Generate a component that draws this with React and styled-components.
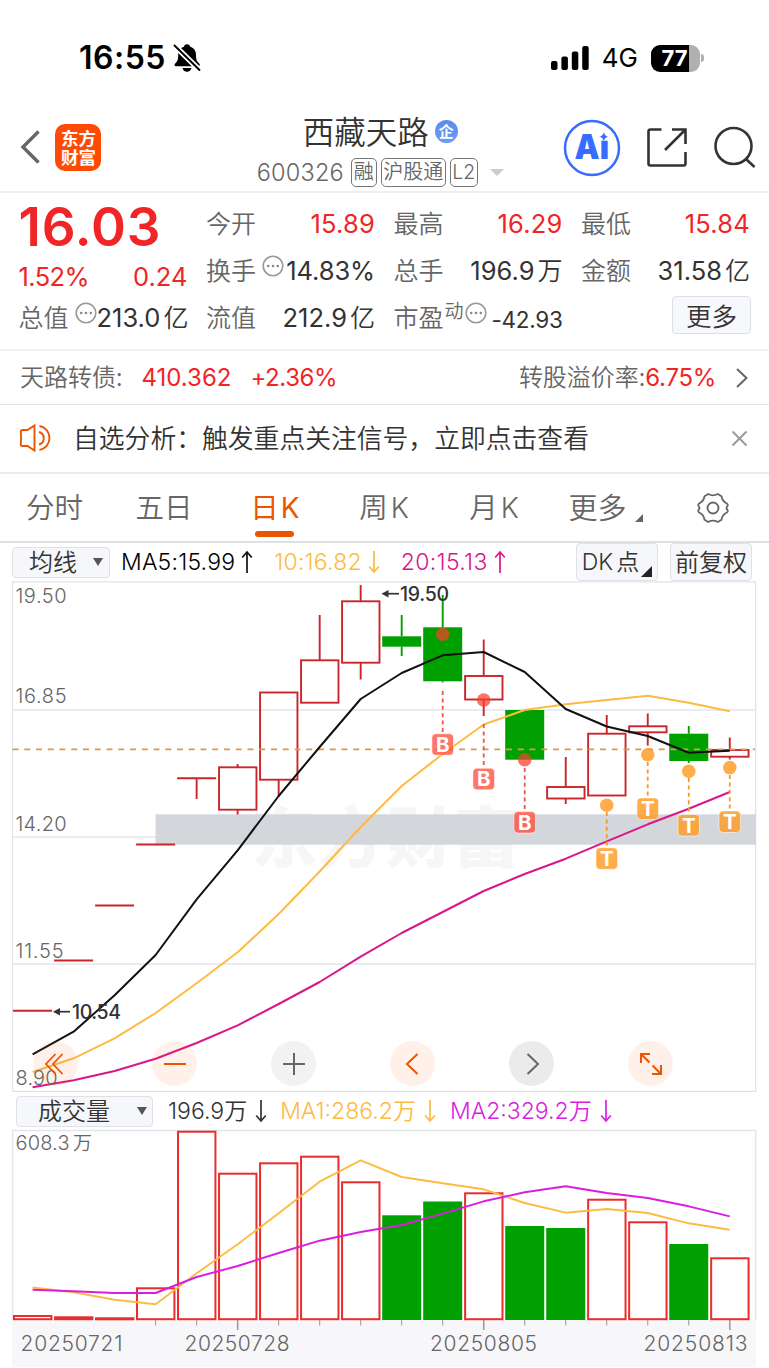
import React from 'react';
import styled, { createGlobalStyle } from 'styled-components';

const RED = '#f12526';
const CANDLE_RED = '#c9252b';
const GREEN = '#00a000';
const ORANGE = '#ea5504';
const YELLOW = '#fdbb42';
const MAGENTA = '#d9168a';
const PURPLE = '#d91ee0';

const GlobalStyle = createGlobalStyle`
  * { box-sizing: border-box; }

  body {
    margin: 0;
    background: #fff;
    color: #333;
    font-family: Inter, 'Noto Sans CJK SC', sans-serif;
    font-weight: 400;
  }

  svg {
    display: block;
    flex-shrink: 0;
    overflow: visible;
  }
`;

const Page = styled.div`
  width: 769px;
  height: 1368px;
  overflow: hidden;
  background: #fff;
`;

const Text = styled.span`
  font-size: ${(props) => props.$size}px;
  font-weight: ${(props) => props.$weight || 400};
  color: ${(props) => props.$color || '#333'};
  letter-spacing: ${(props) => props.$ls || 0}px;
  margin-left: ${(props) => props.$ml || 0}px;
  line-height: 1;
  white-space: nowrap;
`;

const Cjk = styled(Text)`
  padding-bottom: 3px;
  font-family: 'Noto Sans CJK SC', sans-serif;
  font-weight: ${(props) => props.$weight || 350};
`;

/* status bar */

const StatusBar = styled.div`
  display: flex;
  align-items: center;
  height: 96px;
  padding: 20px 65px 0 79px;
`;

const StatusRight = styled.div`
  display: flex;
  align-items: center;
  margin-left: auto;
`;

const Battery = styled.div`
  display: flex;
  align-items: center;
  justify-content: center;
  width: 49px;
  height: 27px;
  padding-right: 2px;
  margin-left: 13px;
  border-radius: 9px;
  background: linear-gradient(90deg, #000 0 38px, #b0b0b0 38px);
`;

const BatteryTip = styled.div`
  width: 3px;
  height: 8px;
  margin-left: 1px;
  border-radius: 0 3px 3px 0;
  background: #b0b0b0;
`;

/* header */

const Header = styled.header`
  display: flex;
  align-items: center;
  height: 97px;
  padding: 7px 12px 0 20px;
  border-bottom: 2px solid #eee;
`;

const Logo = styled.div`
  width: 46px;
  height: 47px;
  margin-left: 15px;
  padding: 4px 4px 4px 6px;
  border-radius: 10px;
  background: #ff4a03;
  font-family: 'Noto Sans CJK SC', sans-serif;
  font-size: 17.5px;
  font-weight: 700;
  line-height: 19px;
  color: #fff;
`;

const TitleBlock = styled.div`
  display: flex;
  flex-direction: column;
  align-items: center;
  width: 285px;
  height: 80px;
  margin-left: 139px;
`;

const TitleRow = styled.div`
  display: flex;
  align-items: center;
  height: 42px;
  margin-top: 4px;
`;

const CodeRow = styled.div`
  display: flex;
  align-items: center;
  height: 29px;
  margin-top: 5px;
`;

const CompanyMark = styled.div`
  display: flex;
  align-items: center;
  justify-content: center;
  width: 23px;
  height: 23px;
  margin: 0 0 1px 6px;
  border-radius: 50%;
  background: linear-gradient(#5a8bef, #6e9cf2);
`;

const Tag = styled.span`
  display: flex;
  align-items: center;
  justify-content: center;
  width: ${(props) => props.$w}px;
  height: 29px;
  margin-left: ${(props) => props.$ml || 4}px;
  border: 1px solid #777;
  border-radius: 5px;
`;

const Caret = styled.i`
  width: 0;
  height: 0;
  margin-left: ${(props) => props.$ml}px;
  border: solid transparent;
  border-width: ${(props) => props.$h}px ${(props) => props.$w / 2}px 0;
  border-top-color: ${(props) => props.$color};
`;

const HeaderIcons = styled.div`
  display: flex;
  align-items: center;
  margin-left: 42px;
  padding-top: 2px;
`;

/* quote */

const Quote = styled.section`
  display: grid;
  grid-template-columns: repeat(4, 169px);
  column-gap: 18.5px;
  height: 158px;
  padding: 7px 0 0 18.5px;
  border-bottom: 2px solid #f1f1f1;
`;

const QuoteColumn = styled.div`
  display: flex;
  flex-direction: column;
`;

const QuoteRow = styled.div`
  display: flex;
  align-items: center;
  justify-content: space-between;
  height: ${(props) => props.$h || 47}px;
`;

const LabelGroup = styled.div`
  display: flex;
  align-items: center;
`;

const MoreButton = styled.button`
  width: 79px;
  height: 38px;
  margin: 0 -1px 5px auto;
  padding: 0;
  border: 1px solid #dcdfe5;
  border-radius: 4px;
  background: #f7f8fb;
`;

/* rows under the quote */

const BondRow = styled.div`
  display: flex;
  align-items: center;
  height: 54px;
  padding: 0 21px 0 20px;
  border-bottom: 1px solid #e4e4e4;
`;

const Notice = styled.div`
  display: flex;
  align-items: center;
  height: 69px;
  padding: 0 21px 1px 20px;
  border-bottom: 2px solid #ececec;
`;

const Spacer = styled.div`
  flex: 1;
`;

const Tabs = styled.nav`
  display: flex;
  height: 69px;
  border-bottom: 2px solid #dfe0e2;
`;

const Tab = styled.div`
  position: relative;
  display: flex;
  align-items: center;
  justify-content: center;
  width: ${(props) => props.$w || 110}px;

  &::after {
    content: '';
    display: ${(props) => (props.$active ? 'block' : 'none')};
    position: absolute;
    left: 36px;
    bottom: 4px;
    width: 39px;
    height: 6px;
    border-radius: 3px;
    background: ${ORANGE};
  }
`;

/* indicators and charts */

const IndicatorBar = styled.div`
  display: flex;
  align-items: center;
  height: 38px;
  padding-left: ${(props) => props.$pl}px;
  padding-right: 17px;
`;

const Select = styled.div`
  display: flex;
  align-items: center;
  width: ${(props) => props.$w}px;
  height: 31px;
  padding-left: ${(props) => props.$pl}px;
  border: 1px solid #dfe1e7;
  border-radius: 4px;
  background: #f6f7fa;
`;

const ChipButton = styled.div`
  display: flex;
  align-items: center;
  justify-content: center;
  width: 82px;
  height: 38px;
  margin-left: ${(props) => props.$ml || 0}px;
  border: 1px solid #dfe1e7;
  border-radius: 4px;
  background: #f6f7fa;
`;

const ChartArea = styled.div`
  position: relative;
  padding-left: 12px;
  height: ${(props) => props.$h}px;
`;

const Controls = styled.div`
  position: absolute;
  left: 33px;
  bottom: 6px;
  display: flex;
  gap: 74px;
`;

const RoundButton = styled.div`
  display: flex;
  align-items: center;
  justify-content: center;
  width: 45px;
  height: 45px;
  border-radius: 50%;
  background: ${(props) => props.$bg};
`;

const STEP = 41.01;
const FIRST = 32.6;
const cx = (i) => FIRST + STEP * i;

// open/close edges and wick ends, in chart units
const candles = [
  { top: 1010.7, bottom: 1010.7 },
  { top: 960.5, bottom: 960.5 },
  { top: 905.5, bottom: 905.5 },
  { top: 844.5, bottom: 844.5 },
  { top: 778.3, bottom: 778.3, low: 799 },
  { top: 767.3, bottom: 809.7, high: 764, low: 814.5 },
  { top: 692.5, bottom: 779.7, low: 797 },
  { top: 660.3, bottom: 702.7, high: 615 },
  { top: 601.3, bottom: 662.7, high: 585, low: 679.5 },
  { top: 636.3, bottom: 646.7, high: 615, low: 656, down: true },
  { top: 627.3, bottom: 681.3, high: 595, low: 682.5, down: true },
  { top: 676, bottom: 699.5, high: 639.5, low: 716 },
  { top: 710, bottom: 759.7, down: true },
  { top: 787, bottom: 798.5, high: 757, low: 804 },
  { top: 733.7, bottom: 795.5, high: 715 },
  { top: 726.3, bottom: 732.3, high: 713.5, low: 745.5 },
  { top: 733.7, bottom: 761, high: 726, low: 763, down: true },
  { top: 750, bottom: 756.7, high: 737.5, low: 759.5 },
];

const ma5 = [1054.3, 1031.7, 995.3, 955, 899.3, 850.3, 796, 747, 699, 673, 655.3, 652, 672, 709, 726.5, 736, 752.7, 750.7];
const ma10 = [1072, 1058.3, 1038.3, 1013, 983.3, 952.3, 914, 871.5, 827, 786, 754, 724.5, 710, 704.3, 700, 695.7, 702.7, 711.3];
const ma20 = [1087.3, 1080.3, 1071, 1058.7, 1043, 1025.3, 1004, 982, 956.7, 933, 912, 891, 874, 858.7, 841.3, 824.3, 808.7, 792];

const signals = [
  { i: 10, type: 'B', dot: 634.3, from: 691, y: 744.5 },
  { i: 11, type: 'B', dot: 700, from: 724, y: 779 },
  { i: 12, type: 'B', dot: 759.8, from: 768, y: 822.3 },
  { i: 14, type: 'T', dot: 805.3, from: 812, y: 858.5 },
  { i: 15, type: 'T', dot: 754.7, from: 762, y: 808.7 },
  { i: 16, type: 'T', dot: 771.3, from: 778, y: 825.3 },
  { i: 17, type: 'T', dot: 767.6, from: 775, y: 821.7 },
];

const volumes = [
  { top: 1316 },
  { top: 1317.3 },
  { top: 1318.3 },
  { top: 1288.3 },
  { top: 1131.7 },
  { top: 1173.7 },
  { top: 1163.3 },
  { top: 1156.7 },
  { top: 1182.3 },
  { top: 1215.3, down: true },
  { top: 1201.5, down: true },
  { top: 1193.3 },
  { top: 1226, down: true },
  { top: 1228, down: true },
  { top: 1199.7 },
  { top: 1222.3 },
  { top: 1244, down: true },
  { top: 1258.3 },
];
const vma1 = [1287.5, 1292.3, 1299.7, 1304.3, 1273.3, 1244.3, 1213.3, 1181.7, 1160.3, 1177, 1183.3, 1189.3, 1203, 1212.7, 1209, 1213, 1223.3, 1229.7];
const vma2 = [1289.7, 1291.3, 1293, 1293, 1277, 1266, 1253, 1240.7, 1232, 1225, 1213.7, 1201.3, 1192.3, 1186.3, 1193, 1198, 1206.3, 1216.3];

const points = (series) => series.map((y, i) => `${cx(i)},${y}`).join(' ');

function ChartText({ x, y, w, size = 20, fill = '#666', weight = 350, children }) {
  return (
    <text x={x} y={y} textLength={w} fontSize={size} fill={fill} fontWeight={weight}>
      {children}
    </text>
  );
}

function Candle({ data, i }) {
  const { top, bottom, high, low, down } = data;
  const x = cx(i);
  const color = down ? GREEN : CANDLE_RED;
  return (
    <g stroke={color} strokeWidth="1.9" fill="none">
      {high && <path d={`M${x} ${high}V${top}`} />}
      {low && <path d={`M${x} ${bottom}V${low}`} />}
      {top === bottom && <path d={`M${x - 19.5} ${top}h39`} />}
      {top !== bottom && !down && (
        <rect x={x - 18.6} y={top} width="37.4" height={bottom - top} />
      )}
      {down && <rect x={x - 19.5} y={top} width="39" height={bottom - top} fill={GREEN} stroke="none" />}
    </g>
  );
}

function Signal({ i, type, dot, from, y }) {
  const x = cx(i);
  const buy = type === 'B';
  const fill = buy ? 'rgba(255,72,55,.75)' : 'rgba(255,155,35,.82)';
  return (
    <g>
      <circle cx={x} cy={dot} r="6.8" fill={buy ? 'rgba(250,62,42,.72)' : fill} />
      <path d={`M${x} ${from}V${y - 11}`} stroke={buy ? '#ee5448' : '#f59a23'} strokeWidth="1.8" strokeDasharray="4 3.4" />
      <rect x={x - 10.8} y={y - 10.8} width="21.6" height="21.6" rx="4" fill={fill} stroke="#fff" strokeOpacity=".55" />
      <text x={x} y={y + 7.2} textAnchor="middle" fontSize="20.5" fontWeight="700" fill="#fff">
        {type}
      </text>
    </g>
  );
}

function PriceChart() {
  return (
    <svg width="745" height="511" viewBox="12 581 745 511">
      <path d="M12 710H756M12 837H756M12 964H756" stroke="#e4e6ed" strokeWidth="1.6" />
      <path d="M12.6 581.8H755.7V1091.4H12.6Z" fill="none" stroke="#e2e3e8" strokeWidth="1.2" />
      <text x="251" y="862" textLength="268" fontSize="66" fontWeight="900" fill="#f6f6f7" fontFamily="Noto Sans CJK SC">
        东方财富
      </text>
      <rect x="155.5" y="814.3" width="600.5" height="30.4" fill="#d3d6db" />
      <ChartText x="15.5" y="603" w="51">19.50</ChartText>
      <ChartText x="15.5" y="703" w="51">16.85</ChartText>
      <ChartText x="15.5" y="831" w="51">14.20</ChartText>
      <ChartText x="15.5" y="958" w="48">11.55</ChartText>
      {candles.map((c, i) => (
        <Candle key={i} data={c} i={i} />
      ))}
      <path d="M12.5 749.4H755" stroke="#d79a52" strokeWidth="1.9" strokeDasharray="6 5.75" />
      <g fill="none" strokeWidth="2" strokeLinejoin="round">
        <polyline points={points(ma10)} stroke={YELLOW} />
        <polyline points={points(ma20)} stroke={MAGENTA} />
        <polyline points={points(ma5)} stroke="#111" />
      </g>
      <g stroke="#333" strokeWidth="1.7" fill="#333">
        <path d="M386 593.7H399" />
        <path d="M381.5 593.7l7-3.7v7.4z" stroke="none" />
        <path d="M58 1011.7H70" />
        <path d="M53 1011.7l7-3.7v7.4z" stroke="none" />
      </g>
      <ChartText x="400" y="601" w="49" size="19.5" fill="#333" weight="450">19.50</ChartText>
      <ChartText x="72" y="1018.5" w="49" size="19.5" fill="#333" weight="450">10.54</ChartText>
      {signals.map((s) => (
        <Signal key={s.i} {...s} />
      ))}
      <ChartText x="15.5" y="1085" w="42">8.90</ChartText>
    </svg>
  );
}

function VolumeChart() {
  return (
    <svg width="745" height="238" viewBox="12 1130 745 238">
      <rect x="12" y="1320" width="744" height="47" fill="#f7f7fa" />
      <path d="M12.6 1320V1130.5H755.7V1320" fill="none" stroke="#e2e6e8" strokeWidth="1.4" />
      <ChartText x="15.5" y="1150" w="54">608.3</ChartText>
      <text x="73" y="1150" fontSize="19" fontWeight="350" fill="#666" fontFamily="Noto Sans CJK SC">万</text>
      {volumes.map(({ top, down }, i) =>
        down ? (
          <rect key={i} x={cx(i) - 19.5} y={top} width="39" height={1320 - top} fill={GREEN} />
        ) : (
          <rect key={i} x={cx(i) - 18.6} y={top} width="37.4" height={Math.max(1319.2 - top, 1)} fill="none" stroke="#e92c2c" strokeWidth="2" />
        )
      )}
      {volumes.map((_, i) => {
        if (i < 3) return null;
        const major = i % 6 === 5;
        return <path key={i} d={`M${cx(i)} 1320v${major ? 10 : 5.5}`} stroke="#999" strokeWidth={major ? 1.5 : 1} />;
      })}
      <g fill="none" strokeWidth="1.9" strokeLinejoin="round">
        <polyline points={points(vma1)} stroke={YELLOW} />
        <polyline points={points(vma2)} stroke={PURPLE} />
      </g>
      <ChartText x="20.5" y="1351" w="102" size="21">20250721</ChartText>
      <ChartText x="184.5" y="1351" w="105" size="21">20250728</ChartText>
      <ChartText x="430" y="1351" w="107" size="21">20250805</ChartText>
      <ChartText x="643.5" y="1351" w="104" size="21">20250813</ChartText>
    </svg>
  );
}

function Arrow({ up, color, ml = 6 }) {
  return (
    <svg width="12" height="24" viewBox="0 0 12 24" style={{ marginLeft: ml }} fill="none" stroke={color} strokeWidth="1.7">
      <path d={up ? 'M6 23V2M1.2 7.5L6 2l4.8 5.5' : 'M6 1v21M1.2 16.5L6 22l4.8-5.5'} />
    </svg>
  );
}

function Info() {
  return (
    <svg width="22" height="22" viewBox="0 0 22 22">
      <circle cx="11" cy="11" r="9.8" fill="none" stroke="#999" strokeWidth="1.6" />
      <g fill="#888">
        <circle cx="6.2" cy="11" r="1.3" />
        <circle cx="11" cy="11" r="1.3" />
        <circle cx="15.8" cy="11" r="1.3" />
      </g>
    </svg>
  );
}

const InfoSlot = styled(LabelGroup)`
  margin-left: ${(props) => props.$ml}px;
  padding-bottom: 9px;
`;

const Superscript = styled(LabelGroup)`
  padding-bottom: 14px;
`;

const LoweredValue = styled(LabelGroup)`
  padding-top: 5px;
`;

function Value({ children, unit, color = '#333', size = 25.5, ls = 0 }) {
  return (
    <LabelGroup>
      <Text $size={size} $color={color} $ls={ls}>{children}</Text>
      {unit && <Cjk $size={25} $ml={3}>{unit}</Cjk>}
    </LabelGroup>
  );
}

function Label({ children }) {
  return <Cjk $size={25} $color="#666">{children}</Cjk>;
}

function Status() {
  return (
    <StatusBar>
      <Text $size={32} $weight={600} $color="#000" $ls={0.5}>16:55</Text>
      <svg width="28" height="30" viewBox="0 0 28 30" style={{ marginLeft: 7 }}>
        <path d="M14 1.2c1.9 0 3 1.2 3.2 2.6 3.9 1.1 5.8 4.2 5.8 8.2 0 5.5 1.2 6.5 3.4 8.8.9 1 .4 2.4-1 2.4H3c-1.5 0-2-1.3-1-2.4C4.2 18.5 5.2 17 5.2 12c0-4 1.9-7.1 5.7-8.2.2-1.5 1.3-2.6 3.1-2.6z" fill="#000" />
        <path d="M9.5 25h9c-.4 2.3-2.2 3.7-4.5 3.7S9.9 27.3 9.5 25z" fill="#000" />
        <path d="M1 2l26 25.5" stroke="#fff" strokeWidth="5.5" />
        <path d="M1.5 2.5L26.5 27" stroke="#000" strokeWidth="1.9" strokeLinecap="round" />
      </svg>
      <StatusRight>
        <svg width="38" height="24" viewBox="0 0 38 24">
          <rect x="0" y="15" width="6.5" height="9" rx="2" />
          <rect x="10.4" y="10.5" width="6.5" height="13.5" rx="2" />
          <rect x="20.8" y="5.5" width="6.5" height="18.5" rx="2" />
          <rect x="31.2" y="0" width="6.5" height="24" rx="2" />
        </svg>
        <Text $size={26} $color="#000" $ml={13}>4G</Text>
        <Battery>
          <Text $size={22} $weight={700} $color="#fff">77</Text>
        </Battery>
        <BatteryTip />
      </StatusRight>
    </StatusBar>
  );
}

function TopBar() {
  return (
    <Header>
      <svg width="20" height="36" viewBox="0 0 20 36" fill="none" stroke="#666" strokeWidth="3.4">
        <path d="M18.5 2.5L3 18l15.5 15.5" />
      </svg>
      <Logo>东方<br />财富</Logo>
      <TitleBlock>
        <TitleRow>
          <Cjk $size={31.5}>西藏天路</Cjk>
          <CompanyMark>
            <Cjk $size={15} $weight={700} $color="#fff">企</Cjk>
          </CompanyMark>
        </TitleRow>
        <CodeRow>
          <Text $size={23.5} $weight={350} $color="#666" $ls={0.2}>600326</Text>
          <Tag $w={26} $ml={7}><Cjk $size={20} $color="#666">融</Cjk></Tag>
          <Tag $w={65}><Cjk $size={20} $color="#666">沪股通</Cjk></Tag>
          <Tag $w={28}><Text $size={19.5} $weight={350} $color="#666">L2</Text></Tag>
          <Caret $ml={12} $w={14} $h={7} $color="#ccc" />
        </CodeRow>
      </TitleBlock>
      <HeaderIcons>
        <svg width="58" height="58" viewBox="0 0 58 58">
          <circle cx="29" cy="29" r="27" fill="none" stroke="#3a6bff" strokeWidth="2.5" />
          <text x="11.5" y="40" textLength="34.5" lengthAdjust="spacingAndGlyphs" fontSize="34" fontWeight="900" fill="#3a6bff">Ai</text>
          <rect x="35.5" y="11.5" width="11.5" height="10.2" fill="#fff" />
          <path d="M40.8 13.2q1 3.800 4.300 4.500-3.300.8-4.300 4.500-1-3.700-4.300-4.500 3.300-.7 4.300-4.500z" fill="#3a6bff" />
        </svg>
        <svg width="42" height="42" viewBox="0 0 42 42" fill="none" stroke="#333" strokeWidth="2.6" style={{ marginLeft: 25 }}>
          <path d="M15.5 2.5H4.5Q2.5 2.5 2.5 4.5V36.5Q2.5 38.500 4.500 38.500H37.500Q39.500 38.500 39.500 36.500V25M26 2.500H39.500V17M39 3L19 23" />
        </svg>
        <svg width="44" height="44" viewBox="0 0 44 44" fill="none" stroke="#333" strokeWidth="2.6" style={{ marginLeft: 25 }}>
          <circle cx="20.5" cy="20" r="18" />
          <path d="M33 33L41.5 41" />
        </svg>
      </HeaderIcons>
    </Header>
  );
}

function QuotePanel() {
  return (
    <Quote>
      <QuoteColumn>
        <QuoteRow $h={54}>
          <Text $size={53} $weight={600} $color={RED} $ls={0.8}>16.03</Text>
        </QuoteRow>
        <QuoteRow $h={46}>
          <Value color={RED} ls={-0.6}>1.52%</Value>
          <Value color={RED}>0.24</Value>
        </QuoteRow>
        <QuoteRow $h={35}>
          <LabelGroup>
            <Label>总值</Label>
            <InfoSlot $ml={6}><Info /></InfoSlot>
          </LabelGroup>
          <Value unit="亿">213.0</Value>
        </QuoteRow>
      </QuoteColumn>
      <QuoteColumn>
        <QuoteRow>
          <Label>今开</Label>
          <Value color={RED} ls={0.2}>15.89</Value>
        </QuoteRow>
        <QuoteRow>
          <LabelGroup>
            <Label>换手</Label>
            <InfoSlot $ml={6}><Info /></InfoSlot>
          </LabelGroup>
          <Value ls={-0.1}>14.83%</Value>
        </QuoteRow>
        <QuoteRow>
          <Label>流值</Label>
          <Value unit="亿">212.9</Value>
        </QuoteRow>
      </QuoteColumn>
      <QuoteColumn>
        <QuoteRow>
          <Label>最高</Label>
          <Value color={RED} ls={0.2}>16.29</Value>
        </QuoteRow>
        <QuoteRow>
          <Label>总手</Label>
          <Value unit="万">196.9</Value>
        </QuoteRow>
        <QuoteRow>
          <LabelGroup>
            <Label>市盈</Label>
            <Superscript>
              <Cjk $size={19} $color="#666" $ml={1}>动</Cjk>
            </Superscript>
            <InfoSlot $ml={1}><Info /></InfoSlot>
          </LabelGroup>
          <LoweredValue>
            <Value size={22.5} ls={-0.3}>-42.93</Value>
          </LoweredValue>
        </QuoteRow>
      </QuoteColumn>
      <QuoteColumn>
        <QuoteRow>
          <Label>最低</Label>
          <Value color={RED} ls={0.2}>15.84</Value>
        </QuoteRow>
        <QuoteRow>
          <Label>金额</Label>
          <Value unit="亿">31.58</Value>
        </QuoteRow>
        <QuoteRow>
          <MoreButton>
            <Cjk $size={25.5}>更多</Cjk>
          </MoreButton>
        </QuoteRow>
      </QuoteColumn>
    </Quote>
  );
}

function TabBar() {
  return (
    <Tabs>
      <Tab $w={109}><Cjk $size={28.5} $color="#666">分时</Cjk></Tab>
      <Tab><Cjk $size={28.5} $color="#666">五日</Cjk></Tab>
      <Tab $active>
        <Cjk $size={28.5} $color={ORANGE} $weight={400} $ml={2}>日</Cjk>
        <Text $size={28} $color={ORANGE} $ml={2}>K</Text>
      </Tab>
      <Tab>
        <Cjk $size={28.5} $color="#666">周</Cjk>
        <Text $size={28} $weight={350} $color="#666" $ml={3}>K</Text>
      </Tab>
      <Tab>
        <Cjk $size={28.5} $color="#666">月</Cjk>
        <Text $size={28} $weight={350} $color="#666" $ml={3}>K</Text>
      </Tab>
      <Tab $w={113}>
        <Cjk $size={29} $color="#666">更多</Cjk>
        <svg width="8" height="8" viewBox="0 0 8 8" style={{ marginLeft: 8, marginTop: 20 }}>
          <path d="M8 0V8H0z" fill="#666" />
        </svg>
      </Tab>
      <Tab $w={101}>
        <svg width="34" height="34" viewBox="0 0 34 34" fill="none" stroke="#666" strokeWidth="1.8" strokeLinejoin="round">
          <path d="M12.2 3Q17 5.7 21.8 3L25.5 5.2Q26 10 30.8 12.5Q32.2 13.3 31.6 14.8Q29.5 17 31.6 19.2Q32.2 20.7 30.8 21.5Q26 24 25.5 28.8L21.8 31Q17 28.3 12.2 31L8.5 28.8Q8 24 3.2 21.5Q1.8 20.7 2.4 19.2Q4.5 17 2.4 14.8Q1.8 13.3 3.2 12.5Q8 10 8.5 5.2Z" />
          <circle cx="17" cy="17" r="5.5" />
        </svg>
      </Tab>
    </Tabs>
  );
}

function ChartControls() {
  const warm = 'rgba(255, 95, 20, .09)';
  return (
    <Controls>
      <RoundButton $bg={warm}>
        <svg width="20" height="24" viewBox="0 0 20 24" fill="none" stroke={ORANGE} strokeWidth="1.8" style={{ marginRight: 4 }}>
          <path d="M11.5 2L2 12l9.5 10M18.5 2L9 12l9.5 10" />
        </svg>
      </RoundButton>
      <RoundButton $bg={warm}>
        <svg width="22" height="22" viewBox="0 0 22 22" stroke={ORANGE} strokeWidth="2">
          <path d="M0 11h22" />
        </svg>
      </RoundButton>
      <RoundButton $bg="rgba(0, 0, 0, .05)">
        <svg width="22" height="22" viewBox="0 0 22 22" stroke="#666" strokeWidth="2">
          <path d="M0 11h22M11 0v22" />
        </svg>
      </RoundButton>
      <RoundButton $bg={warm}>
        <svg width="14" height="22" viewBox="0 0 14 22" fill="none" stroke={ORANGE} strokeWidth="2" style={{ marginRight: 2 }}>
          <path d="M12.5 1L2 11l10.5 10" />
        </svg>
      </RoundButton>
      <RoundButton $bg="rgba(0, 0, 0, .08)">
        <svg width="14" height="22" viewBox="0 0 14 22" fill="none" stroke="#666" strokeWidth="2" style={{ marginLeft: 3 }}>
          <path d="M1.5 1L12 11 1.5 21" />
        </svg>
      </RoundButton>
      <RoundButton $bg={warm}>
        <svg width="24" height="24" viewBox="0 0 24 24" fill="none" stroke={ORANGE} strokeWidth="2">
          <path d="M11 2H2v9M2 2l8.5 8.5M22 13v9h-9M22 22l-8.5-8.5" />
        </svg>
      </RoundButton>
    </Controls>
  );
}

function App() {
  return (
    <Page>
      <GlobalStyle />
      <Status />
      <TopBar />
      <QuotePanel />
      <BondRow>
        <Cjk $size={24} $color="#666">天路转债:</Cjk>
        <Text $size={24} $color={RED} $ml={19}>410.362</Text>
        <Text $size={24} $color={RED} $ml={19} $ls={-0.4}>+2.36%</Text>
        <Spacer />
        <Cjk $size={24} $color="#666">转股溢价率:</Cjk>
        <Text $size={24} $color={RED} $ls={-0.3}>6.75%</Text>
        <svg width="12" height="20" viewBox="0 0 12 20" fill="none" stroke="#666" strokeWidth="2" style={{ marginLeft: 20 }}>
          <path d="M1 1l9.5 9L1 19" />
        </svg>
      </BondRow>
      <Notice>
        <svg width="33" height="28" viewBox="0 0 33 28" fill="none" stroke={ORANGE} strokeWidth="1.9">
          <path d="M14.500 1.500V26.500L7.500 22H2.500Q.5 22 .8 19.500Q1.500 14 .8 8.500Q.5 6 2.500 6H7.500Z" />
          <path d="M19 8A6.500 6.500 0 0 1 19 20.500M19.500 2A12.200 12.200 0 0 1 19.500 26" />
        </svg>
        <Cjk $size={25.8} $ml={20}>自选分析：触发重点关注信号，立即点击查看</Cjk>
        <Spacer />
        <svg width="17" height="17" viewBox="0 0 17 17" stroke="#999" strokeWidth="1.9">
          <path d="M1.5 1.5l14 14M15.5 1.5l-14 14" />
        </svg>
      </Notice>
      <TabBar />
      <IndicatorBar $pl={12}>
        <Select $w={98} $pl={16}>
          <Cjk $size={24}>均线</Cjk>
          <Caret $ml={16} $w={10} $h={8} $color="#555" />
        </Select>
        <Text $size={23} $weight={350} $color="#000" $ml={11} $ls={0.2}>MA5:15.99</Text>
        <Arrow up color="#111" />
        <Text $size={23} $weight={350} $color={YELLOW} $ml={21} $ls={0.2}>10:16.82</Text>
        <Arrow color={YELLOW} />
        <Text $size={23} $weight={350} $color={MAGENTA} $ml={21} $ls={0.3}>20:15.13</Text>
        <Arrow up color={MAGENTA} />
        <Spacer />
        <ChipButton>
          <Text $size={23} $weight={350}>DK</Text>
          <Cjk $size={23} $ml={3}>点</Cjk>
          <svg width="11" height="11" viewBox="0 0 11 11" style={{ marginLeft: 2, marginTop: 18 }}>
            <path d="M11 0V11H0z" fill="#222" />
          </svg>
        </ChipButton>
        <ChipButton $ml={12}>
          <Cjk $size={24}>前复权</Cjk>
        </ChipButton>
      </IndicatorBar>
      <ChartArea $h={511}>
        <PriceChart />
        <ChartControls />
      </ChartArea>
      <IndicatorBar $pl={16}>
        <Select $w={137} $pl={21}>
          <Cjk $size={24}>成交量</Cjk>
          <Caret $ml={27} $w={10} $h={8} $color="#555" />
        </Select>
        <Text $size={23} $weight={350} $ml={15}>196.9</Text>
        <Cjk $size={23}>万</Cjk>
        <Arrow color="#333" ml={8} />
        <Text $size={23} $weight={350} $color={YELLOW} $ml={13}>MA1:286.2</Text>
        <Cjk $size={23} $color={YELLOW}>万</Cjk>
        <Arrow color={YELLOW} ml={8} />
        <Text $size={23} $weight={350} $color={PURPLE} $ml={14}>MA2:329.2</Text>
        <Cjk $size={23} $color={PURPLE}>万</Cjk>
        <Arrow color={PURPLE} ml={8} />
      </IndicatorBar>
      <ChartArea $h={238}>
        <VolumeChart />
      </ChartArea>
    </Page>
  );
}

export default App;
